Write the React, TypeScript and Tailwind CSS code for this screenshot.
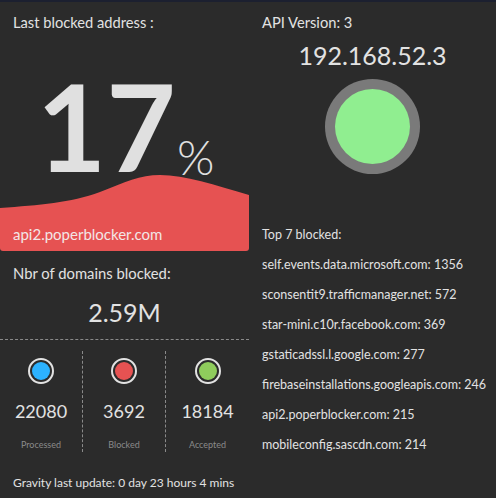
import React from "react";

const top = [
  "self.events.data.microsoft.com: 1356",
  "sconsentit9.trafficmanager.net: 572",
  "star-mini.c10r.facebook.com: 369",
  "gstaticadssl.l.google.com: 277",
  "firebaseinstallations.googleapis.com: 246",
  "api2.poperblocker.com: 215",
  "mobileconfig.sascdn.com: 214",
];

function Dot({ color }: { color: string }) {
  return (
    <div className="w-[26px] h-[26px] rounded-full border-[2.5px] border-[#e2e2e2] p-[2px]">
      <div className="w-full h-full rounded-full" style={{ background: color }} />
    </div>
  );
}

export default function App() {
  return (
    <div
      className="w-[496px] h-[498px] bg-[#2b2b2b] text-[#e2e2e2] overflow-hidden border-t-2 border-[#1c2030]"
      style={{ fontFamily: "Lato, 'Open Sans', sans-serif" }}
    >
      <div className="grid grid-cols-[249px_1fr]">
        {/* Left column */}
        <div className="flex flex-col">
          <div className="flex flex-col">
            <div className="pl-[13px] pt-[12px] text-[14.7px] leading-[17px] whitespace-nowrap">Last blocked address :</div>
            <div className="h-[142px] flex items-end justify-center pl-[2px]">
              <span className="text-[120px] leading-[93px] font-bold text-[#e0e0e0]">17</span>
              <span className="text-[48px] leading-[37px] font-light ml-[1px] mb-[-2px] text-[#e0e0e0]">%</span>
            </div>
            <svg width="249" height="35" viewBox="0 0 249 35" className="block">
              <path d="M0,35 C40,32 70,30 100,19 C125,9 140,2 160,2 C185,2 215,12 249,22 V35 H0 Z" fill="#e65252" />
            </svg>
            <div className="h-[43px] bg-[#e65252] rounded-b-[3px] pl-[13px] pt-[17px] text-[15px] leading-[18px] text-[#f3e6e6] whitespace-nowrap">
              api2.poperblocker.com
            </div>
          </div>
          <div className="pl-[13px] pt-[13px] text-[14.8px] leading-[18px] whitespace-nowrap">Nbr of domains blocked:</div>
          <div className="mt-[15px] text-center text-[25px] leading-[30px]">2.59M</div>
          <div className="mt-[12px] border-t border-dashed border-[#8a8a8a]" />
          <div className="mt-[11px] grid grid-cols-[82px_83px_1fr] h-[101px]">
            {[
              ["#2cb2ff", "22080", "Processed"],
              ["#e65252", "3692", "Blocked"],
              ["#8fcc5c", "18184", "Accepted"],
            ].map(([c, n, l], i) => (
              <div
                key={l}
                className={
                  "flex flex-col items-center pt-[7px] " +
                  (i > 0 ? "border-l border-dashed border-[#8a8a8a]" : "")
                }
              >
                <Dot color={c} />
                <div className="mt-[16px] text-[18px] leading-[22px]">{n}</div>
                <div className="mt-[17px] text-[9px] leading-[11px] text-[#8a8a8a]">{l}</div>
              </div>
            ))}
          </div>
          <div className="pl-[13px] mt-[23px] text-[12px] leading-[16px] whitespace-nowrap">
            Gravity last update: 0 day 23 hours 4 mins
          </div>
        </div>
        {/* Right column */}
        <div className="flex flex-col">
          <div className="pl-[13px] pt-[12px] text-[14.7px] leading-[17px] whitespace-nowrap">API Version: 3</div>
          <div className="mt-[9px] text-center text-[25px] leading-[30px]">192.168.52.3</div>
          <div className="mt-[9px] flex justify-center">
            <div className="w-[95px] h-[95px] rounded-full bg-[#7a7a7a] p-[10px]">
              <div className="w-full h-full rounded-full bg-[#90ee90]" />
            </div>
          </div>
          <div className="mt-[46px] pl-[13px] text-[12.5px] leading-[30px] whitespace-nowrap">
            <div>Top 7 blocked:</div>
            {top.map((t) => (
              <div key={t}>{t}</div>
            ))}
          </div>
        </div>
      </div>
    </div>
  );
}
